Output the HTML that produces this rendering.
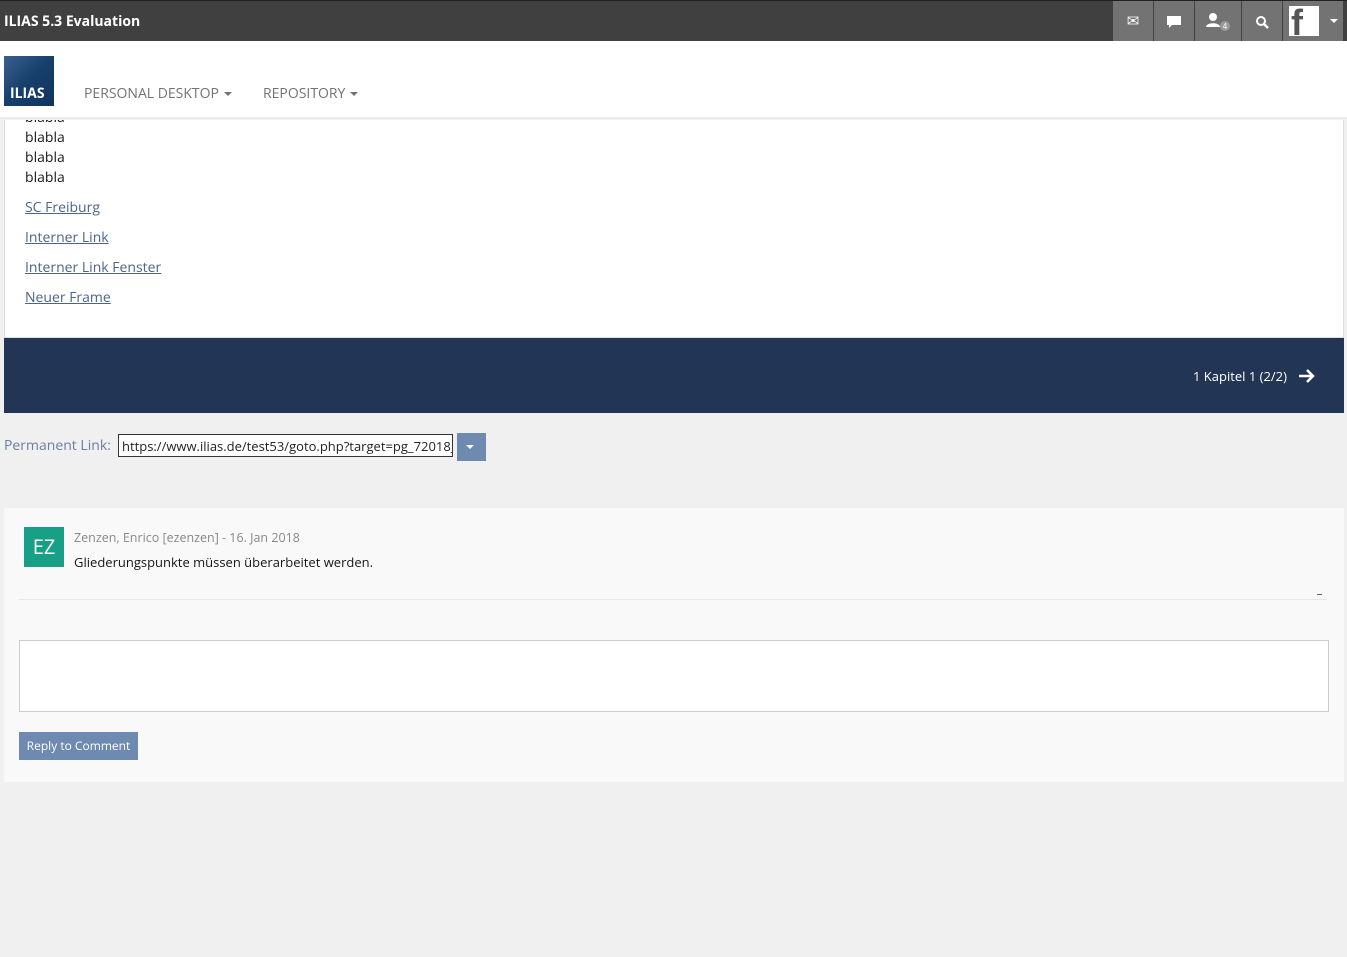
<!DOCTYPE html>
<html><head><meta charset="utf-8"><style>
*{box-sizing:border-box;margin:0;padding:0}
body{width:1347px;height:957px;background:#f0f0f0;font-family:"Open Sans","Liberation Sans",sans-serif;position:relative;overflow:hidden}
.top{position:absolute;left:0;top:0;width:1347px;height:41px;background:#404040;border-top:1px solid #222}
.top .t{position:absolute;left:4px;top:11px;color:#fff;font-weight:bold;font-size:14px}
.ic{position:absolute;top:0;height:40px;background:#737373;color:#fff;text-align:center;line-height:40px;font-size:15px}
.hdr{position:absolute;left:0;top:41px;width:1347px;height:78px;background:#fff;border-bottom:2px solid #eaeaea}
.logo{position:absolute;left:4px;top:15px;width:50px;height:50px;background:linear-gradient(135deg,#3b5f8c,#173f6b 50%,#0e3560);color:#fff;font-weight:bold;font-size:14px;padding:28px 0 0 6px}
.menu{position:absolute;top:43px;color:#737373;font-size:14px}
.car{display:inline-block;border-left:4px solid transparent;border-right:4px solid transparent;border-top:4px solid #737373;vertical-align:middle;margin-left:5px}
.panel{position:absolute;left:4px;top:120px;width:1340px;height:218px;background:#fff;border:1px solid #ddd;border-top:none;overflow:hidden}
.panel div{position:absolute;left:20px;font-size:14px;color:#161616}
.panel a{color:#4c6586;text-decoration:underline}
.nav{position:absolute;left:4px;top:338px;width:1340px;height:75px;background:#233554;color:#fff;font-size:13px}
.pl{position:absolute;left:4px;top:436px;font-size:14px;color:#6a7fa0}
.inp{position:absolute;left:118px;top:434px;width:335px;height:23px;border:1px solid #333;background:#fff;font-size:13px;padding:2px 3px;overflow:hidden;white-space:nowrap;color:#222}
.dd{position:absolute;left:457px;top:433px;width:29px;height:28px;background:#6f8ab0}
.cm{position:absolute;left:4px;top:508px;width:1340px;height:274px;background:#f9f9f9}
</style></head><body>
<div class="top"><div class="t">ILIAS 5.3 Evaluation</div>
<div class="ic" style="left:1113px;width:40px">✉</div>
<div class="ic" style="left:1154px;width:40px">
<svg width="16" height="14" viewBox="0 0 16 14" style="vertical-align:middle"><path d="M1 1h14v9H6l-3 3V10H1z" fill="#fff"/></svg></div>
<div class="ic" style="left:1195px;width:46px"><svg width="30" height="20" viewBox="0 0 30 20" style="vertical-align:middle"><circle cx="10" cy="5" r="4" fill="#fff"/><path d="M3 15c0-5 14-5 14 0z" fill="#fff"/><circle cx="22" cy="14" r="5" fill="#999"/><text x="22" y="17" font-size="8" fill="#fff" text-anchor="middle" font-family="Liberation Sans">4</text></svg></div>
<div class="ic" style="left:1242px;width:40px"><svg width="14" height="14" viewBox="0 0 14 14" style="vertical-align:middle"><circle cx="6" cy="6" r="4" stroke="#fff" stroke-width="2" fill="none"/><path d="M9 9l4 4" stroke="#fff" stroke-width="2.5"/></svg></div>
<div class="ic" style="left:1283px;width:60px"><div style="position:absolute;left:6px;top:5px;width:30px;height:30px;background:#fff;color:#555;font:bold 36px/34px 'Liberation Sans';text-align:left;padding-left:2px">f</div><span class="car" style="border-top-color:#fff;position:absolute;left:42px;top:18px"></span></div>
</div>
<div class="hdr"><div class="logo">ILIAS</div>
<div class="menu" style="left:84px">PERSONAL DESKTOP<span class="car"></span></div>
<div class="menu" style="left:263px">REPOSITORY<span class="car"></span></div></div>
<div class="panel">
<div style="top:-12px">blabla</div><div style="top:8px">blabla</div><div style="top:28px">blabla</div><div style="top:48px">blabla</div>
<div style="top:78px"><a>SC Freiburg</a></div>
<div style="top:108px"><a>Interner Link</a></div>
<div style="top:138px"><a>Interner Link Fenster</a></div>
<div style="top:168px"><a>Neuer Frame</a></div>
</div>
<div class="nav"><span style="position:absolute;left:1189px;top:29px">1 Kapitel 1 (2/2)</span>
<svg style="position:absolute;left:1294px;top:30px" width="18" height="16" viewBox="0 0 18 16"><path d="M1 8h14M9 2l6 6-6 6" stroke="#fff" stroke-width="2.5" fill="none"/></svg></div>
<div class="pl">Permanent Link:</div>
<div class="inp">https://www.ilias.de/test53/goto.php?target=pg_72018_4</div>
<div class="dd"><span class="car" style="border-top-color:#fff;position:absolute;left:9px;top:12px;margin:0"></span></div>
<div class="cm">
<div style="position:absolute;left:20px;top:19px;width:40px;height:40px;background:#17a085;color:#fff;font-size:20px;text-align:center;line-height:40px">EZ</div>
<div style="position:absolute;left:70px;top:21px;font-size:12.5px;color:#888">Zenzen, Enrico [ezenzen] - 16. Jan 2018</div>
<div style="position:absolute;left:70px;top:45px;font-size:13px;color:#161616">Gliederungspunkte müssen überarbeitet werden.</div>
<div style="position:absolute;left:1313px;top:86px;width:5px;height:1px;background:#4c6586"></div>
<div style="position:absolute;left:15px;top:91px;width:1308px;height:1px;background:#e6e6e6"></div>
<div style="position:absolute;left:15px;top:132px;width:1310px;height:72px;background:#fff;border:1px solid #ccc"></div>
<div style="position:absolute;left:15px;top:224px;width:119px;height:28px;background:#6f8ab0;color:#fff;font-size:12px;line-height:28px;text-align:center">Reply to Comment</div>
</div>
</body></html>
